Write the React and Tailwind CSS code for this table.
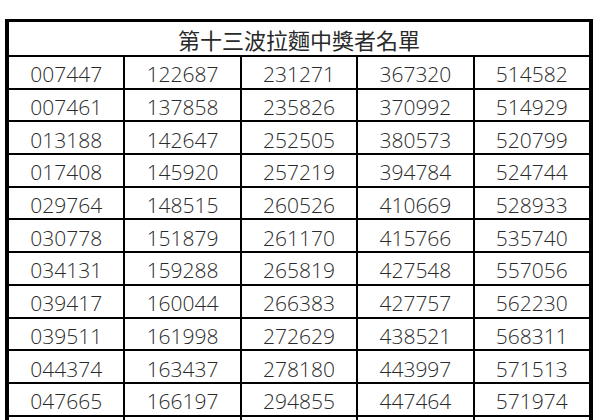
import React from 'react';

const rows = [
  ['007447', '122687', '231271', '367320', '514582'],
  ['007461', '137858', '235826', '370992', '514929'],
  ['013188', '142647', '252505', '380573', '520799'],
  ['017408', '145920', '257219', '394784', '524744'],
  ['029764', '148515', '260526', '410669', '528933'],
  ['030778', '151879', '261170', '415766', '535740'],
  ['034131', '159288', '265819', '427548', '557056'],
  ['039417', '160044', '266383', '427757', '562230'],
  ['039511', '161998', '272629', '438521', '568311'],
  ['044374', '163437', '278180', '443997', '571513'],
  ['047665', '166197', '294855', '447464', '571974'],
  ['', '', '', '', ''],
];

const App = () => {
  return (
    <div className="w-[600px] h-[420px] overflow-hidden bg-white">
      <div className="ml-[5px] mt-[19px] w-[588px] border-l-4 border-r-4 border-t-[3px] border-black bg-black">
        <div
          className="grid grid-cols-5 gap-[2px] text-[#2a2a2a]"
          style={{ fontFamily: '"Open Sans", "Noto Sans CJK TC", sans-serif' }}
        >
          <div className="col-span-5 h-[33px] pt-[2px] bg-white flex items-center justify-center text-[22px] leading-none">
            第十三波拉麵中獎者名單
          </div>
          {rows.map((row, i) =>
            row.map((n, j) => (
              <div
                key={i + '-' + j}
                className="h-[30.7px] pt-[5px] bg-white flex items-center justify-center text-[21px] font-light leading-none"
              >
                {n}
              </div>
            ))
          )}
        </div>
      </div>
    </div>
  );
};

export default App;
